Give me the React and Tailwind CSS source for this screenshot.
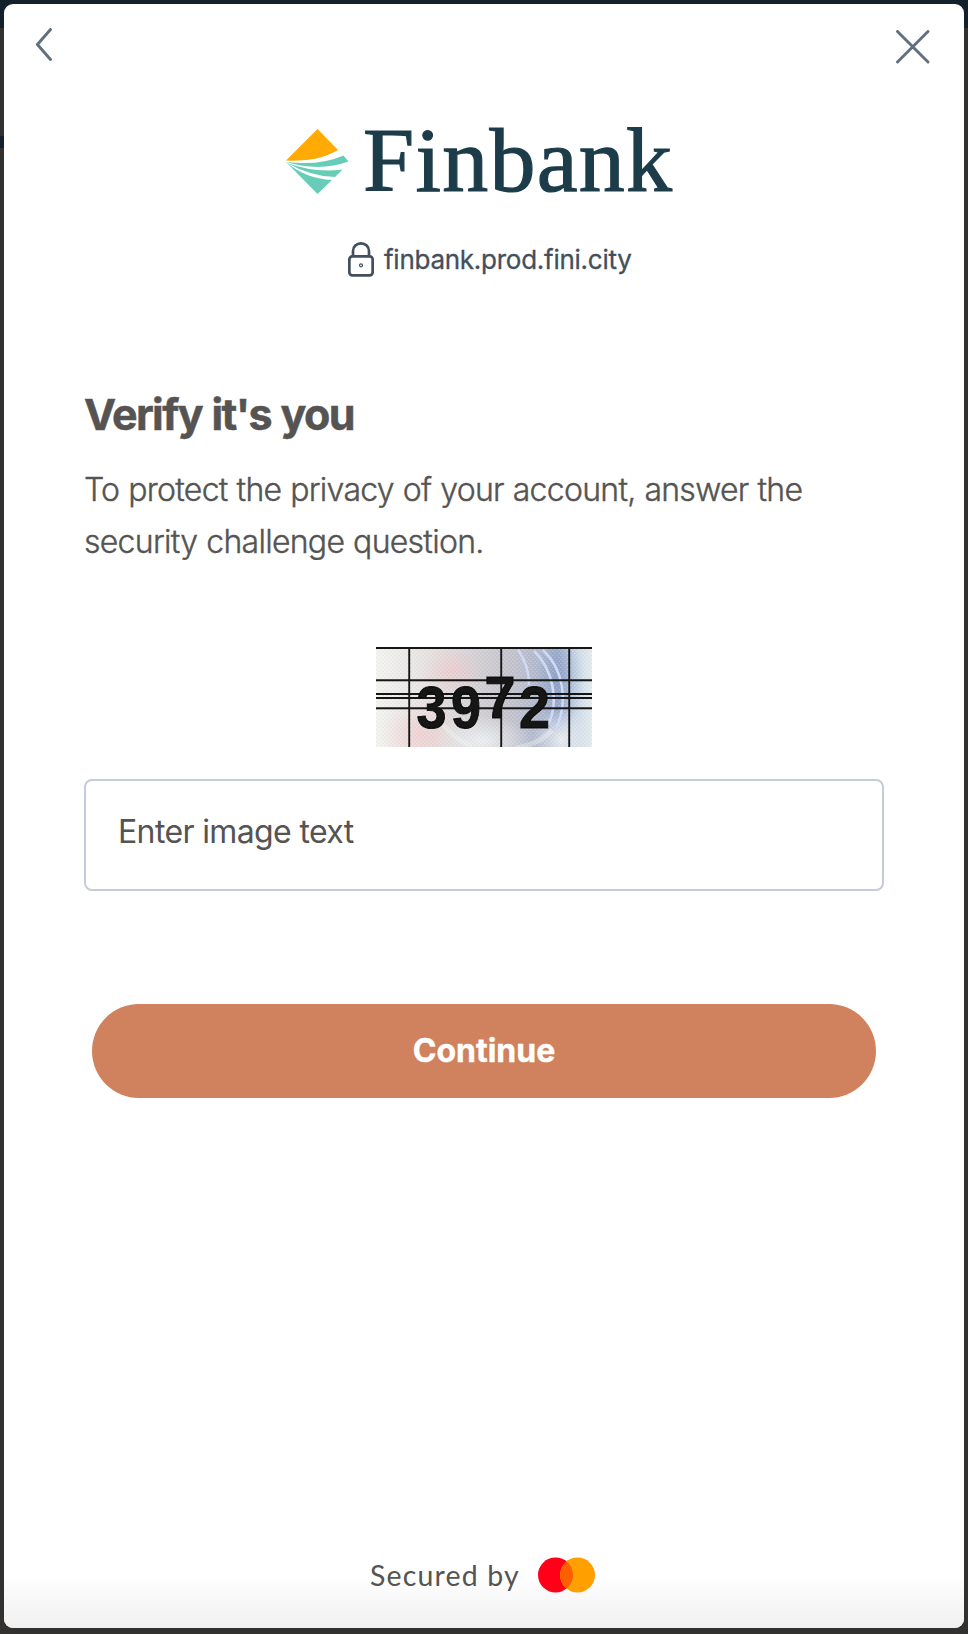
import React from "react";

function Header() {
  return (
    <header className="flex h-[84px] shrink-0 justify-between pl-[32px] pr-[34px] pt-[24px]">
      <button aria-label="Back" className="h-[34px] w-[16px]">
        <svg width="16" height="34" viewBox="0 0 16 34" fill="none" stroke="#61707f" strokeWidth="2.900" strokeLinecap="round" strokeLinejoin="round">
          <path d="M14.500 1.500 1.400 16.500 14.500 31.500" />
        </svg>
      </button>
      <button aria-label="Close" className="mt-[2px] h-[34px] w-[34px]">
        <svg width="34" height="34" viewBox="0 0 34 34" fill="none" stroke="#61707f" strokeWidth="2.900" strokeLinecap="round">
          <path d="M1.500 1.500 32 32M32 1.500 1.500 32" />
        </svg>
      </button>
    </header>
  );
}

function Brand() {
  return (
    <div className="flex h-[64px] items-start pl-[282px]">
      <svg className="mt-[41px] shrink-0" width="63" height="65" viewBox="0 0 63 65">
        <path d="M31.500 0 52 21C38 29.500 19 32.500 0 31.500Z" fill="#ffaa05" />
        <path d="M0 33Q34 37 57.500 26.500L62.500 32.500Q34 43 0 33Z" fill="#68cdb8" />
        <path d="M1 34Q28 44 56.500 40.500L49 48Q25 47.500 1 34Z" fill="#68cdb8" />
        <path d="M0 33Q19 49.500 46 51L31.500 65Z" fill="#68cdb8" />
      </svg>
      <span className="ml-[14px] mt-[19px] font-['Liberation_Serif',serif] text-[92px] leading-[106px] tracking-[1.25px] text-[#1d3c4a] [-webkit-text-stroke:1.2px_#1d3c4a]">
        Finbank
      </span>
    </div>
  );
}

function Site() {
  return (
    <div className="mt-[89px] flex h-[36px] items-start pl-[344px] text-[#434f5d]">
      <svg className="mt-px shrink-0" width="26" height="35" viewBox="0 0 26 35" fill="none" stroke="currentColor" strokeWidth="2.700">
        <rect x="1.350" y="14.350" width="23.300" height="19" rx="3" />
        <path d="M5 14V9.200C5 4.500 8.500 1.400 13 1.400S21 4.500 21 9.200V14" />
        <circle cx="13" cy="23.300" r="1.500" strokeWidth="1.200" />
      </svg>
      <span className="ml-[10px] mt-px whitespace-nowrap font-['Inter',sans-serif] text-[26px] leading-[36px] tracking-[-0.26px] [-webkit-text-stroke:0.3px_#434f5d]">
        finbank.prod.fini.city
      </span>
    </div>
  );
}

function Captcha() {
  return (
    <svg className="block" width="216" height="100" viewBox="0 0 216 100" role="img" aria-label="Security challenge">
      <defs>
        <linearGradient id="wash" x1="0" x2="1">
          <stop offset="0" stopColor="#f3f3f0" />
          <stop offset=".3" stopColor="#e2dedd" />
          <stop offset=".62" stopColor="#c4c3cc" />
          <stop offset=".84" stopColor="#a3b1cd" />
          <stop offset=".92" stopColor="#cad7e6" />
          <stop offset="1" stopColor="#e4ecee" />
        </linearGradient>
        <radialGradient id="pink"><stop stopColor="#f2c4c8" stopOpacity=".6" /><stop offset="1" stopColor="#f2c4c8" stopOpacity="0" /></radialGradient>
        <radialGradient id="pale"><stop stopColor="#edf0f2" stopOpacity=".95" /><stop offset="1" stopColor="#edf0f2" stopOpacity="0" /></radialGradient>
        <radialGradient id="blue"><stop stopColor="#6780b4" stopOpacity=".4" /><stop offset="1" stopColor="#6780b4" stopOpacity="0" /></radialGradient>
        <pattern id="weave" width="4" height="4" patternUnits="userSpaceOnUse">
          <path d="M0 .5H2M2 2.500H4" stroke="#fff" strokeOpacity=".16" />
          <path d="M2 .5H4M0 2.500H2" stroke="#85898a" strokeOpacity=".07" />
        </pattern>
        <filter id="soft"><feGaussianBlur stdDeviation=".6" /></filter>
        <clipPath id="frame"><path d="M0 0H216V100H0Z" /></clipPath>
      </defs>
      <g clipPath="url(#frame)">
        <path d="M0 0H216V100H0Z" fill="url(#wash)" />
        <ellipse cx="76" cy="24" rx="30" ry="24" fill="url(#pink)" />
        <ellipse cx="44" cy="88" rx="40" ry="34" fill="url(#pink)" />
        <ellipse cx="106" cy="94" rx="48" ry="26" fill="url(#pale)" />
        <ellipse cx="184" cy="34" rx="24" ry="48" fill="url(#blue)" />
        <ellipse cx="185" cy="93" rx="28" ry="32" fill="url(#pale)" />
        <path d="M0 0H216V100H0Z" fill="url(#weave)" />
        <g fill="none" filter="url(#soft)">
          <path d="M167 3C187 22 193 54 180 82M158 4C176 21 184 54 172 78M142 3Q153 18 153 38" stroke="#d0daf5" strokeWidth="2.500" />
          <path d="M61 69Q75 91 96 99M176 83Q164 97 140 101" stroke="#eef5f4" strokeWidth="5" strokeOpacity=".4" />
        </g>
        <path d="M-2 1H218M-2 33.300H218M-2 47H218M-2 51H218M-2 61.200H218M33.200 0V102M125.200 0V102M193.200 0V102" stroke="#171717" strokeWidth="1.900" fill="none" filter="url(#soft)" />
        <g fill="#121212" stroke="#121212" strokeWidth="1" fontFamily="Liberation Sans, Arial, sans-serif" fontWeight="700" fontSize="59" filter="url(#soft)">
          <text x="40.500" y="81.300" textLength="30" lengthAdjust="spacingAndGlyphs">3</text>
          <text x="75" y="81.300" textLength="30" lengthAdjust="spacingAndGlyphs">9</text>
          <text x="108.500" y="70.500" textLength="31" lengthAdjust="spacingAndGlyphs">7</text>
          <text x="143" y="81.300" textLength="31" lengthAdjust="spacingAndGlyphs">2</text>
        </g>
      </g>
    </svg>
  );
}

function Footer() {
  return (
    <footer className="mt-auto flex h-[107px] shrink-0 items-start bg-linear-to-b from-white from-50% to-[#f0f0f0] pl-[366px] pt-[36px]">
      <span className="w-[150px] whitespace-nowrap font-['Lato',sans-serif] text-[28.5px] leading-[36px] tracking-[1.15px] text-[#555452]">Secured by</span>
      <svg className="ml-[18px] shrink-0" width="57" height="36" viewBox="0 0 57 36" role="img" aria-label="Mastercard">
        <circle cx="17.500" cy="18" r="17.500" fill="#ff0018" />
        <circle cx="39.500" cy="18" r="17.500" fill="#ff9f00" />
        <path d="M28.500 4.390A17.500 17.500 0 0 1 28.500 31.610A17.500 17.500 0 0 1 28.500 4.390Z" fill="#ff5f00" />
      </svg>
    </footer>
  );
}

export default function App() {
  return (
    <div className="flex h-[1634px] w-[968px] bg-[linear-gradient(#12212c_0_28px,#333130_28px_136px,#12212c_136px_148px,#333130_148px)]">
      <div className="mb-[6px] ml-[4px] mt-[4px] flex w-[960px] flex-col overflow-hidden rounded-[9px] bg-white font-['Inter',sans-serif] text-[#555452]">
        <Header />
        <Brand />
        <Site />
        <main className="mt-[107px] flex flex-col px-[80px]">
          <h1 className="h-[60px] whitespace-nowrap text-[43px] font-bold leading-[60px] tracking-[-1.6px] [word-spacing:1px] [-webkit-text-stroke:0.5px_#555452]">
            Verify it's you
          </h1>
          <p className="mt-[20px] whitespace-nowrap text-[32px] font-light leading-[52px] tracking-[-0.72px] [-webkit-text-stroke:0.4px_#555452] [word-spacing:0.6px]">
            To protect the privacy of your account, answer the
            <br />
            security challenge question.
          </p>
          <div className="mt-[79px] flex justify-center">
            <Captcha />
          </div>
          <div className="mt-[32px] flex h-[112px] items-center rounded-[8px] border-2 border-[#c5cbd7] px-[32px] pb-[6px] text-[32px]">
            <span className="whitespace-nowrap tracking-[-0.63px]">Enter image text</span>
          </div>
          <button className="mx-[8px] mt-[113px] h-[94px] rounded-full bg-[#cf825d] text-[32px] font-bold text-white [-webkit-text-stroke:0.4px_white]">
            Continue
          </button>
        </main>
        <Footer />
      </div>
      <div className="mt-[28px] w-[4px] bg-[#333130]" />
    </div>
  );
}
